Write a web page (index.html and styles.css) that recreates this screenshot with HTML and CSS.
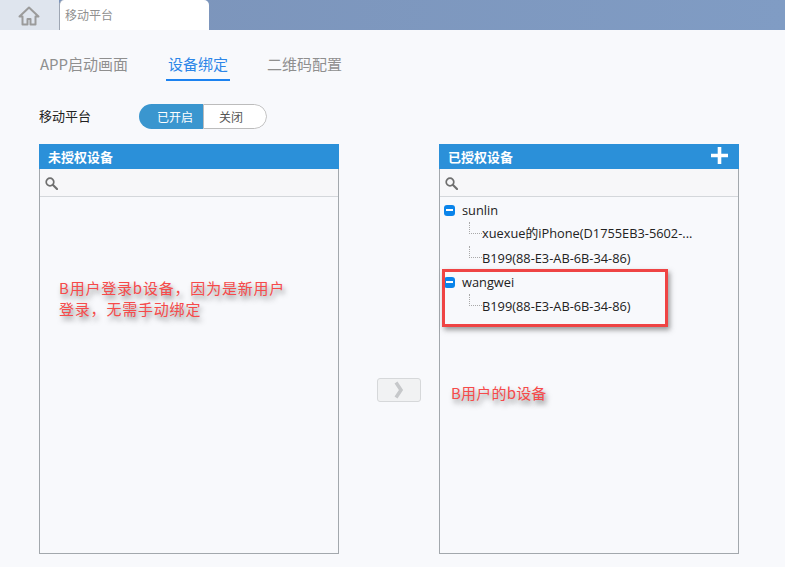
FILE: index.html
```html
<!DOCTYPE html>
<html lang="zh">
<head>
<meta charset="utf-8">
<title>移动平台</title>
<link rel="stylesheet" href="styles.css">
</head>
<body>
<header class="topbar">
  <div class="home-tab">
    <svg class="home-icon" viewBox="0 0 22 20" width="22" height="20"><path d="M1.500 10.500 11 1.500l9.500 9h-3v8h-5v-5.500h-3V18.500h-5v-8z" fill="none" stroke="#9b9b9b" stroke-width="2" stroke-linejoin="round"/></svg>
  </div>
  <div class="page-tab">移动平台</div>
</header>
<main class="content">
  <nav class="tabs">
    <a class="tab">APP启动画面</a>
    <a class="tab active">设备绑定</a>
    <a class="tab">二维码配置</a>
  </nav>
  <div class="setting">
    <span class="setting-label">移动平台</span>
    <div class="switch"><span class="switch-on">已开启</span><span class="switch-off">关闭</span></div>
  </div>
  <div class="panels">
    <section class="panel">
      <h2 class="panel-head">未授权设备</h2>
      <div class="search">
        <svg viewBox="0 0 13 13" width="13" height="13"><circle cx="5" cy="5" r="3.800" fill="none" stroke="#6f6f6f" stroke-width="1.700"/><path d="m8 8 4 4" stroke="#6f6f6f" stroke-width="2.200" stroke-linecap="round"/></svg>
      </div>
      <p class="note note-left">B用户登录b设备，因为是新用户<br>登录，无需手动绑定</p>
    </section>
    <button class="move-btn" type="button">
      <svg viewBox="0 0 10 18" width="10" height="18"><path d="M2 1.500 7 9l-5 7.500" fill="none" stroke="#c6c8ca" stroke-width="3.500"/></svg>
    </button>
    <section class="panel">
      <h2 class="panel-head">已授权设备
        <svg class="plus" viewBox="0 0 17 17" width="17" height="17"><path d="M8.500 0v17M0 8.500h17" stroke="#fff" stroke-width="3.600"/></svg>
      </h2>
      <div class="search">
        <svg viewBox="0 0 13 13" width="13" height="13"><circle cx="5" cy="5" r="3.800" fill="none" stroke="#6f6f6f" stroke-width="1.700"/><path d="m8 8 4 4" stroke="#6f6f6f" stroke-width="2.200" stroke-linecap="round"/></svg>
      </div>
      <ul class="tree">
        <li class="user"><span class="minus"></span>sunlin</li>
        <li class="device device-first"><span class="elbow"></span>xuexue的iPhone(D1755EB3-5602-...</li>
        <li class="device"><span class="elbow"></span>B199(88-E3-AB-6B-34-86)</li>
        <li class="user"><span class="minus"></span>wangwei</li>
        <li class="device"><span class="elbow"></span>B199(88-E3-AB-6B-34-86)</li>
      </ul>
      <div class="highlight"></div>
      <p class="note note-right">B用户的b设备</p>
    </section>
  </div>
</main>
</body>
</html>
```
FILE: styles.css
```css
* { box-sizing: border-box; }
html, body { margin: 0; height: 100%; }
body {
  width: 785px;
  height: 567px;
  overflow: hidden;
  background: #f8f9fc;
  font-family: "Noto Sans CJK SC", "Open Sans", sans-serif;
  color: #222;
}
.topbar {
  display: flex;
  height: 30px;
  background: linear-gradient(90deg, #7b93b9, #809cc4);
}
.home-tab {
  width: 59px;
  background: #dfe5ee;
  display: flex;
  align-items: flex-start;
  justify-content: center;
  padding-top: 6px;
  padding-right: 2px;
}
.page-tab {
  width: 150px;
  background: #fff;
  border-left: 1px solid #9ea6b3;
  border-radius: 5px 5px 0 0;
  padding-left: 5px;
  font-size: 12px;
  line-height: 30px;
  color: #8f8f8f;
}
.content { padding: 22px 0 0 39px; }
.tabs { display: flex; height: 29px; }
.tab {
  font-size: 15px;
  line-height: 24px;
  height: 29px;
  color: #8f8f8f;
}
.tab:first-child { margin-left: 1px; width: 126px; }
.tab.active {
  width: 64px;
  text-align: center;
  color: #2d86e8;
  border-bottom: 2px solid #1c82f0;
  margin-right: 37px;
}
.setting {
  display: flex;
  align-items: center;
  height: 25px;
  margin-top: 23px;
}
.setting-label { width: 100px; font-size: 13px; padding-bottom: 2px; }
.switch {
  display: flex;
  width: 128px;
  height: 25px;
  font-size: 12px;
  line-height: 25px;
  border-radius: 13px;
  overflow: hidden;
}
.switch-on {
  width: 64px;
  background: #3a96cf;
  color: #fff;
  text-align: right;
  padding-right: 10px;
}
.switch-off {
  flex: 1;
  background: #fff;
  color: #555;
  border: 1px solid #bcbcbc;
  border-radius: 0 13px 13px 0;
  padding-left: 15px;
  line-height: 23px;
}
.panels { display: flex; margin-top: 15px; align-items: flex-start; }
.panel {
  position: relative;
  width: 300px;
  height: 410px;
  border: 1px solid #a3a8ad;
  border-top: 0;
}
.panel-head {
  margin: 0 -1px;
  height: 25px;
  padding: 0 9px;
  display: flex;
  justify-content: space-between;
  align-items: center;
  background: #2b90d9;
  color: #fff;
  font-size: 13px;
  font-weight: 700;
}
.plus { margin-right: 2px; margin-top: -3px; }
.search {
  height: 28px;
  padding: 8px 0 0 5px;
  background: #f7f7f9;
  border-bottom: 1px solid #d4d7db;
}
.search svg { display: block; }
.note {
  position: absolute;
  margin: 0;
  font-size: 15px;
  letter-spacing: .8px;
  line-height: 21px;
  color: #f64a4a;
  text-shadow: 2px 4px 5px rgba(50, 50, 50, .55);
  white-space: nowrap;
}
.note-left { left: 19px; top: 133px; }
.note-right { left: 11px; top: 238px; letter-spacing: .2px; }
.move-btn {
  width: 44px;
  height: 24px;
  margin: 234px 18px 0 38px;
  padding: 0;
  display: flex;
  align-items: center;
  justify-content: center;
  background: #f1f2f3;
  border: 1px solid #d6d8da;
  border-radius: 3px;
}
.tree {
  list-style: none;
  margin: 0;
  padding: 1px 0 0 4px;
  font-family: "Open Sans", "Noto Sans CJK SC", sans-serif;
  font-size: 12.800px;
  line-height: 18px;
  color: #222;
}
.user, .device {
  display: flex;
  height: 24px;
  align-items: center;
  white-space: nowrap;
}
.minus {
  position: relative;
  width: 11px;
  height: 11px;
  margin-right: 7px;
  background: #0a84ea;
  border-radius: 3px;
}
.minus::after {
  content: "";
  position: absolute;
  left: 2px;
  right: 2px;
  top: 4px;
  height: 2px;
  background: #fff;
}
.device { padding-left: 25px; }
.device-first { padding-bottom: 2px; }
.elbow {
  align-self: flex-start;
  width: 13px;
  height: 12px;
  border-left: 1px dotted #a9a9a9;
  border-bottom: 1px dotted #a9a9a9;
}
.highlight {
  position: absolute;
  left: 2px;
  top: 125px;
  width: 226px;
  height: 58px;
  border: 3px solid #ef4444;
  box-shadow: 2px 3px 5px rgba(60, 60, 60, .5);
}
```
